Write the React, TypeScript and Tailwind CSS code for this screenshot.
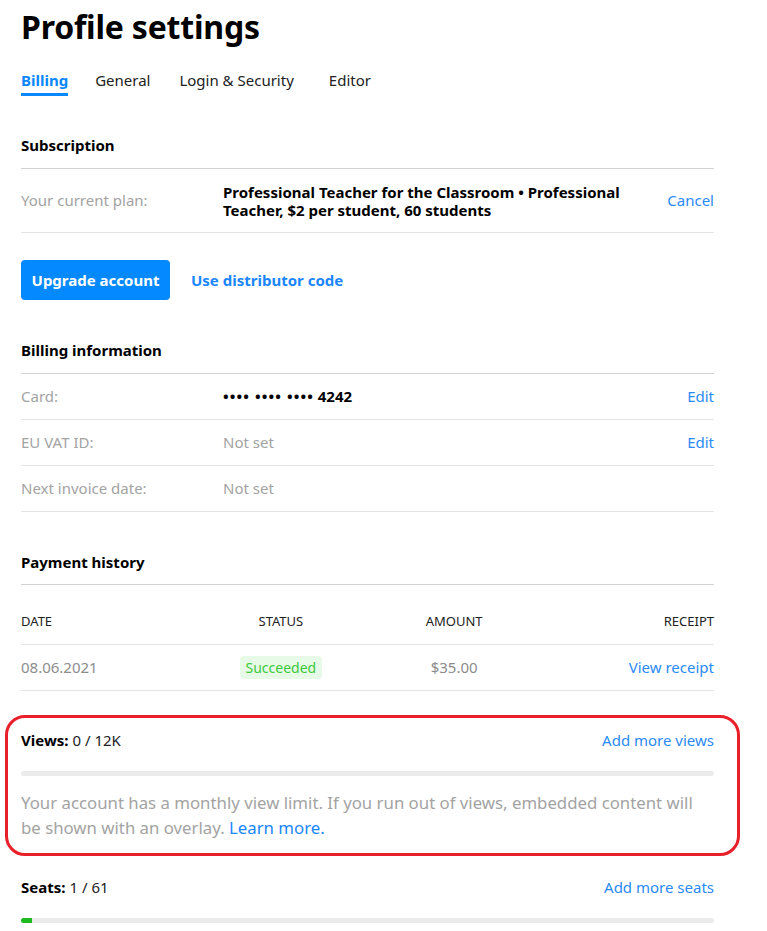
const font = { fontFamily: '"Noto Sans", "Open Sans", sans-serif' };

function Row({ label, children, action }: { label: string; children: React.ReactNode; action?: string }) {
    return (
        <div className="flex items-center h-[46px] border-b border-[#e3e3e3]">
            <div className="w-[202px] text-[15px] text-[#a3a3a3]">{label}</div>
            <div className="flex-1 text-[15px]">{children}</div>
            {action && <a className="text-[15px] text-[#2a8af6]">{action}</a>}
        </div>
    );
}

function SectionTitle({ children, mt }: { children: React.ReactNode; mt: string }) {
    return (
        <div className={`${mt} pb-[11px] border-b border-[#d2d2d2] text-[15px] leading-[24px] font-bold text-black`}>
            {children}
        </div>
    );
}

export default function App() {
    return (
        <div className="bg-white min-h-[931px] w-[767px] overflow-hidden" style={font}>
            <div className="ml-[21px] w-[693px]">
                <h1 className="mt-[7px] text-[32px] leading-[40px] font-bold text-black tracking-[-0.2px]">Profile settings</h1>

                {/* Tabs */}
                <div className="mt-[21px] flex items-start text-[15px] leading-[24px] text-[#222]">
                    <div className="mr-[27px] pb-[1px] border-b-[3px] border-[#0a88ff] font-bold text-[#0a88ff]">Billing</div>
                    <div className="mr-[29px]">General</div>
                    <div className="mr-[35px]">Login &amp; Security</div>
                    <div>Editor</div>
                </div>

                {/* Subscription */}
                <SectionTitle mt="mt-[37px]">Subscription</SectionTitle>
                <div className="flex items-center h-[64px] border-b border-[#e3e3e3]">
                    <div className="w-[202px] text-[15px] text-[#a3a3a3]">Your current plan:</div>
                    <div className="w-[420px] text-[15px] leading-[18px] font-bold text-black">
                        Professional Teacher for the Classroom • Professional Teacher, $2 per student, 60 students
                    </div>
                    <a className="ml-auto text-[15px] text-[#2a8af6]">Cancel</a>
                </div>

                <div className="mt-[27px] flex items-center">
                    <button className="h-[40px] w-[149px] rounded-[4px] bg-[#0589ff] text-white text-[15px] font-bold">
                        Upgrade account
                    </button>
                    <a className="ml-[21px] text-[15px] font-bold text-[#1a86ff]">Use distributor code</a>
                </div>

                {/* Billing information */}
                <SectionTitle mt="mt-[38px]">Billing information</SectionTitle>
                <Row label="Card:" action="Edit">
                    <span className="font-bold text-black">
                        <span className="tracking-[1.1px]">•••• •••• ••••</span> 4242
                    </span>
                </Row>
                <Row label="EU VAT ID:" action="Edit">
                    <span className="text-[#a3a3a3]">Not set</span>
                </Row>
                <Row label="Next invoice date:">
                    <span className="text-[#a3a3a3]">Not set</span>
                </Row>

                {/* Payment history */}
                <div className="mt-[38px] pb-[10px] border-b border-[#d2d2d2] text-[15px] leading-[24px] font-bold text-black">
                    Payment history
                </div>
                <div className="grid grid-cols-4 items-end h-[60px] pb-[11px] border-b border-[#e3e3e3] text-[13px] leading-[24px] text-[#222]">
                    <div>DATE</div>
                    <div className="text-center">STATUS</div>
                    <div className="text-center">AMOUNT</div>
                    <div className="text-right">RECEIPT</div>
                </div>
                <div className="grid grid-cols-4 items-center h-[46px] border-b border-[#e3e3e3] text-[15px]">
                    <div className="text-[#8c8c8c]">08.06.2021</div>
                    <div className="flex justify-center">
                        <span className="px-[6px] h-[23px] leading-[23px] rounded-[4px] bg-[#e7f9e7] text-[14px] text-[#3cc93c]">Succeeded</span>
                    </div>
                    <div className="text-center text-[#8c8c8c]">$35.00</div>
                    <div className="text-right text-[#2a8af6]">View receipt</div>
                </div>

                {/* Views (highlighted) */}
                <div className="mt-[24px] -ml-[16px] -mr-[26px] border-[3px] border-[#e8202a] rounded-[20px] pl-[13px] pr-[23px] pt-[10px] pb-[13px]">
                    <div className="flex items-center text-[15px] leading-[24px]">
                        <span className="font-bold text-black">Views:</span>
                        <span className="ml-[4px] text-[#222]">0 / 12K</span>
                        <a className="ml-auto text-[#2a8af6]">Add more views</a>
                    </div>
                    <div className="mt-[19px] h-[5px] rounded-full bg-[#ebebeb]"></div>
                    <p className="mt-[14px] text-[16.8px] leading-[25px] text-[#a3a3a3]">
                        Your account has a monthly view limit. If you run out of views, embedded content will be shown with an overlay.{" "}
                        <a className="text-[#1a86ff]">Learn more.</a>
                    </p>
                </div>

                {/* Seats */}
                <div className="mt-[19px] flex items-center text-[15px] leading-[24px]">
                    <span className="font-bold text-black">Seats:</span>
                    <span className="ml-[4px] text-[#222]">1 / 61</span>
                    <a className="ml-auto text-[#2a8af6]">Add more seats</a>
                </div>
                <div className="mt-[19px] h-[5px] rounded-full bg-[#ebebeb] overflow-hidden">
                    <div className="h-full w-[11px] bg-[#1fba1f]"></div>
                </div>
            </div>
        </div>
    );
}
